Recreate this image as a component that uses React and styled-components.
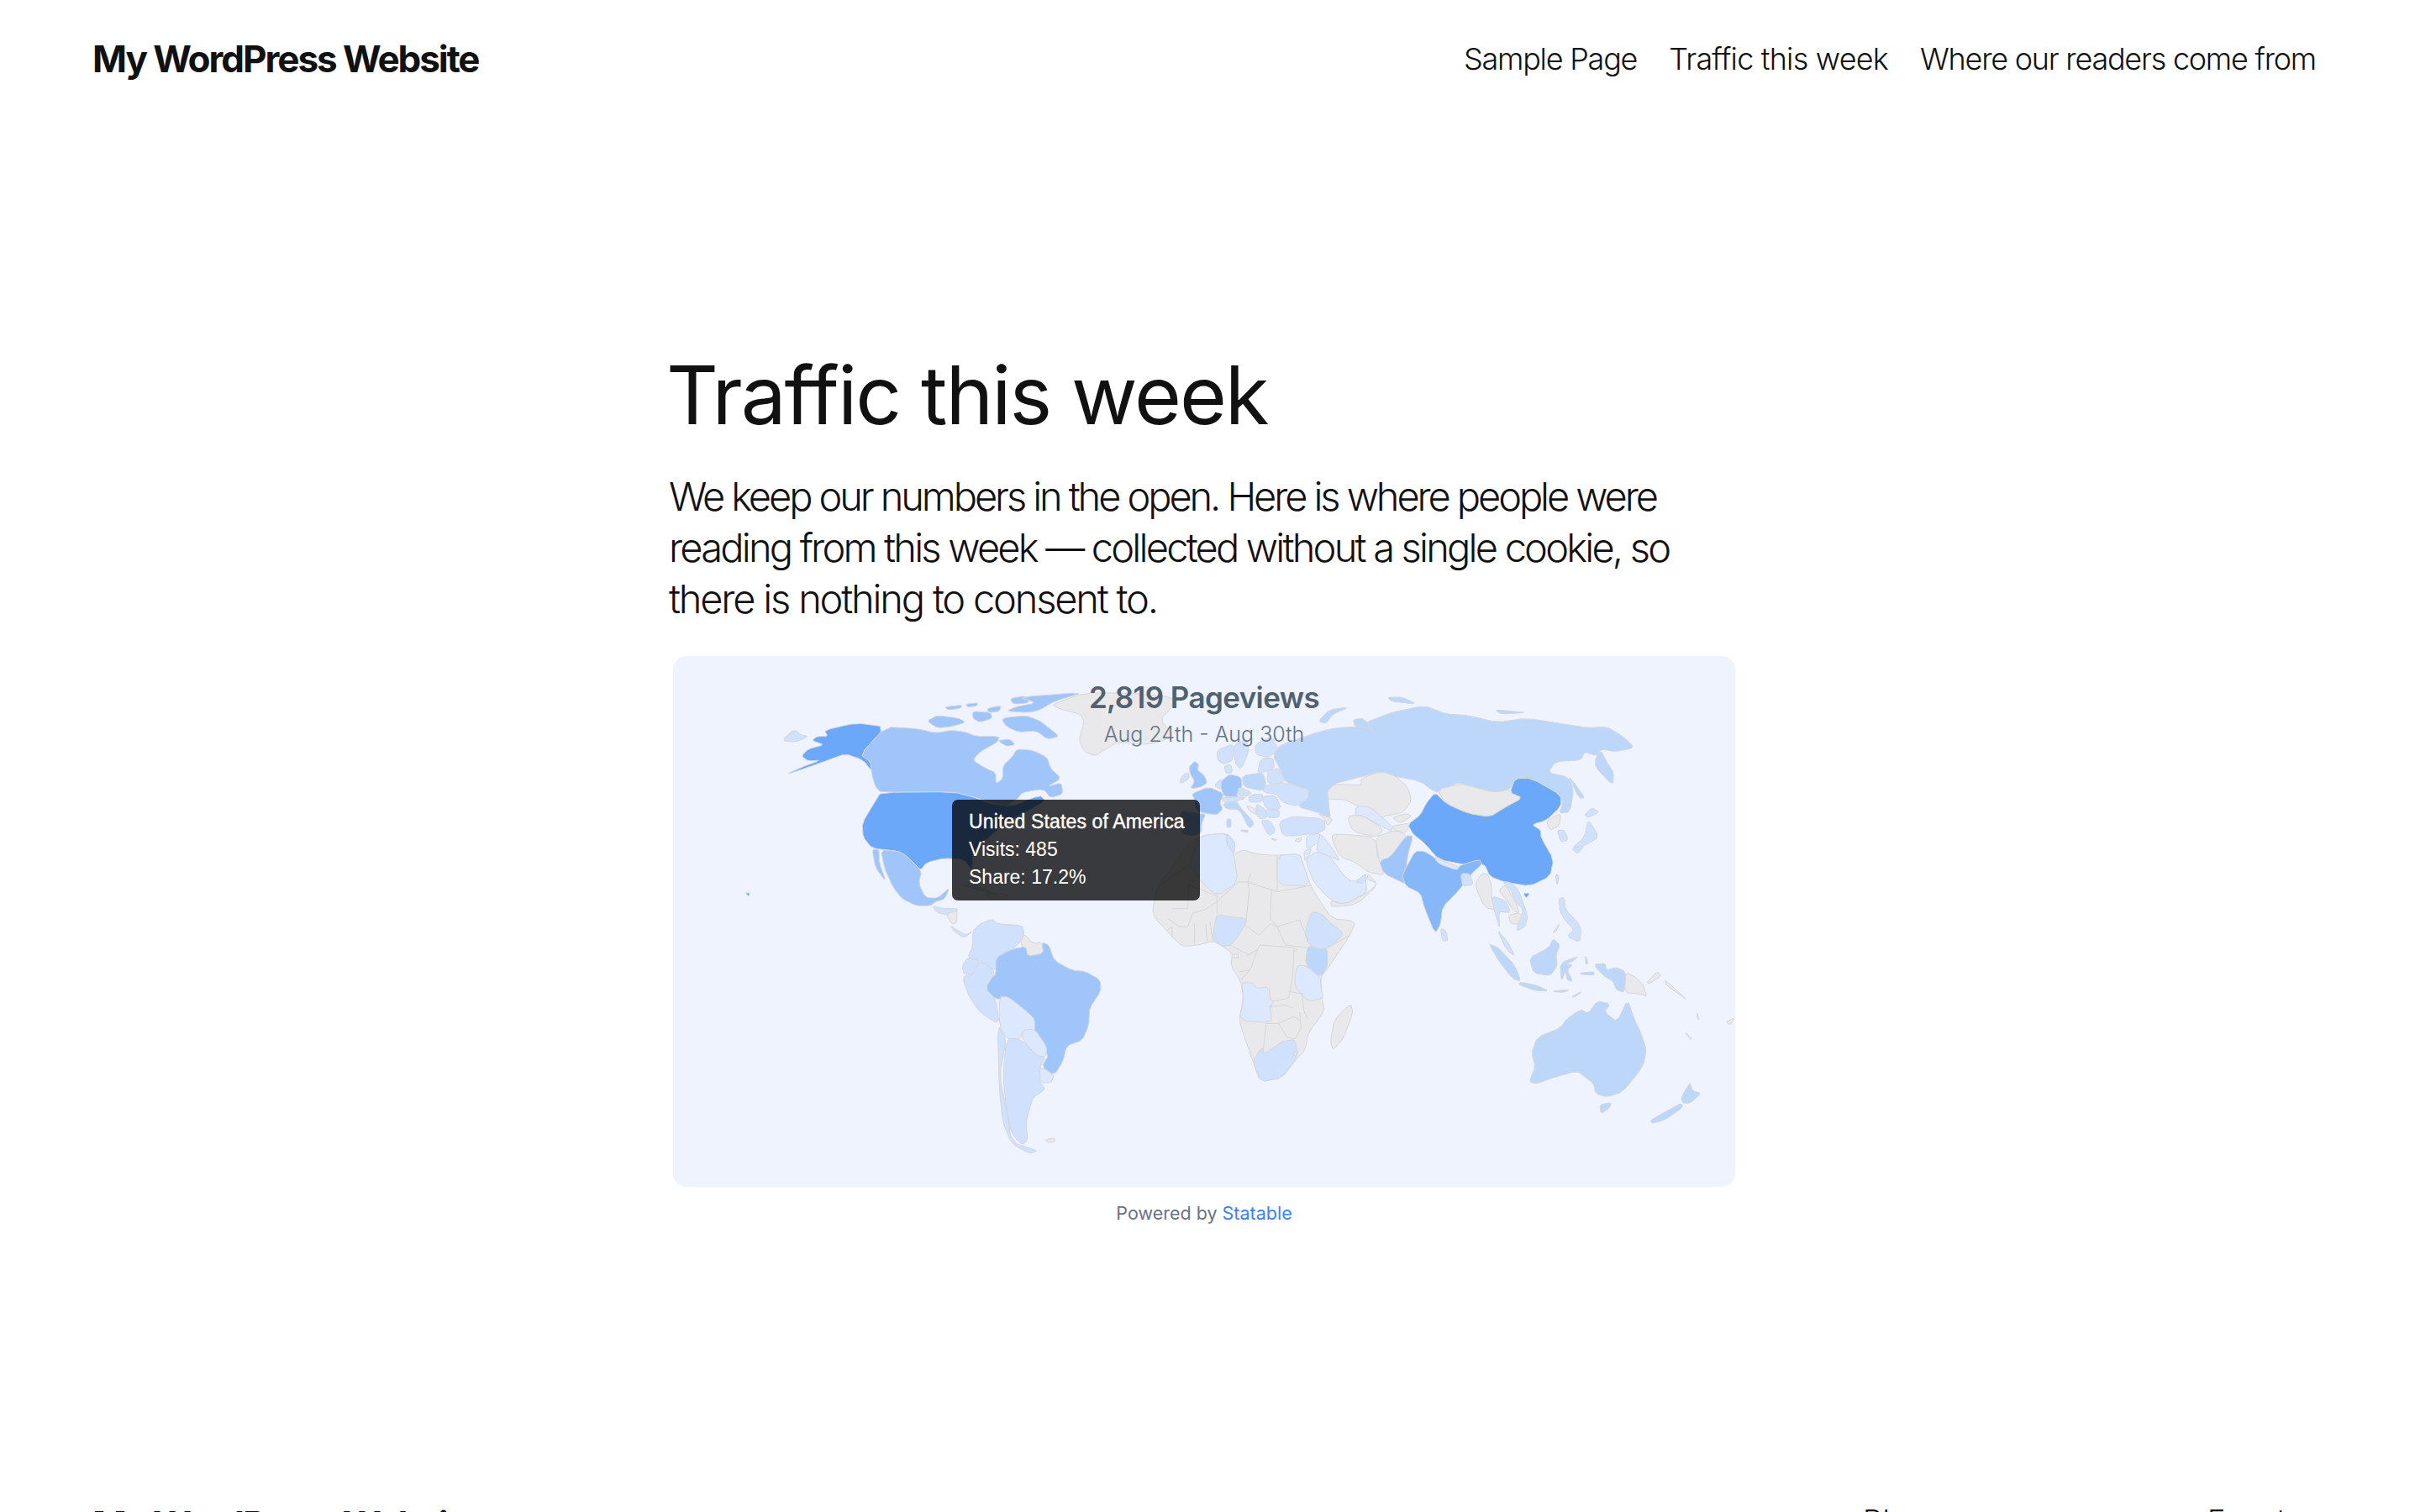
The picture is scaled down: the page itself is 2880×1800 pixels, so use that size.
import React from "react";
import styled, { createGlobalStyle } from "styled-components";

const GlobalStyle = createGlobalStyle`
  html, body {
    margin: 0;
    background: #fff;
    color: #111;
    font-family: Inter, "Liberation Sans", sans-serif;
  }
  #root {
    height: 1800px;
    overflow: hidden;
  }
`;

// the map was traced piece by piece, each frame maps traced coordinates onto the card
const FRAMES = {
  w: "translate(-1,-1) scale(.4209,.3333)",
  ws: "translate(-1,299) scale(.4209,.3333)",
  e: "translate(599,-1) scale(.4337,.3333)",
  es: "translate(599,299) scale(.4337,.3333)",
  eu: "translate(579,99) scale(.3333)",
  af: "translate(539,279) scale(.3333)",
  as: "translate(859,259) scale(.3333)",
};

const SHADES = {
  top: "#6ba8f9",
  india: "#85b7f9",
  mid: "#9fc5fa",
  soft: "#bdd7fa",
  light: "#cfe1fc",
  pale: "#dbe8fd",
  grey: "#e9e9eb",
};

const LAND = [
  // africa base and its colored countries
  ["af", "grey", "95,70 105,20 108,-9 170,-90 210,-150 265,-195 360,-205 390,-170 385,-130 420,-145 465,-130 530,-125 620,-130 630,-100 660,-15 690,35 735,100 820,110 800,160 720,280 695,310 700,390 710,430 650,510 640,570 610,600 558,669 480,684 453,609 425,530 404,465 420,380 408,320 375,270 380,225 345,200 310,180 260,195 200,200 160,160 105,100"],
  ["af", "pale", "265,-195 360,-205 360,-165 385,-130 400,-30 325,20 270,-30 250,-60 225,-90"],
  ["af", "light", "360,-205 390,-170 385,-130 360,-165"],
  ["af", "pale", "540,-125 620,-130 630,-100 660,-18 540,-18"],
  ["af", "light", "325,85 370,95 430,100 425,125 395,170 375,195 345,200 310,175 315,130"],
  ["af", "light", "665,75 700,85 735,120 780,155 725,205 690,210 650,190 640,155 650,110"],
  ["af", "soft", "650,195 690,210 718,205 720,270 695,310 640,265"],
  ["af", "pale", "610,270 640,268 695,310 695,345 705,385 650,398 600,340"],
  ["af", "pale", "412,330 455,330 465,350 510,345 515,390 530,395 515,415 520,473 405,465 420,385"],
  ["af", "light", "453,609 480,684 558,669 615,590 603,531 558,540 492,585 485,560"],
  ["af", "grey", "600,575 612,582 600,592"],
  ["af", "grey", "803,404 810,440 775,530 740,570 730,540 745,460"],

  // north america
  ["w", "top", "430,268 520,242 603,256 532,355 560,375 575,412 565,415 540,375 490,352 440,375 385,400 320,427 370,398 420,375 385,378 365,360 385,335 430,320 395,305 410,290 440,290"],
  ["w", "mid", "532,355 603,256 690,262 745,278 790,268 830,275 860,290 925,290 920,310 870,345 850,375 880,400 915,420 915,460 935,440 935,395 960,365 975,335 1020,340 1060,365 1070,405 1100,440 1060,470 1100,455 1105,495 1070,510 1050,478 990,490 975,515 940,540 900,525 860,510 830,500 795,488 590,490 575,470 565,430 560,380"],
  ["w", "mid", "720,235 750,215 810,225 830,240 790,255 750,260"],
  ["w", "mid", "770,185 820,178 815,190 780,195"],
  ["w", "mid", "830,175 865,170 860,182 835,185"],
  ["w", "mid", "890,190 930,180 925,200 895,205"],
  ["w", "mid", "850,200 900,205 905,225 870,240 850,225"],
  ["w", "mid", "930,225 1000,215 1040,235 1060,255 1095,290 1060,300 1030,270 980,275 945,255"],
  ["w", "mid", "955,155 1000,145 1010,170 965,175"],
  ["w", "mid", "980,150 1165,132 1080,165 1040,195 1010,205 945,200 970,185 1030,170"],
  ["w", "mid", "920,305 955,300 970,320 945,325"],
  ["w", "grey", "1075,175 1165,135 1290,135 1420,150 1410,190 1380,230 1420,290 1350,320 1260,310 1220,340 1195,360 1165,345 1150,300 1165,240 1155,210 1090,190"],
  ["w", "light", "310,305 345,265 365,285 385,290 350,310"],
  ["w", "top", "590,490 795,488 860,510 900,530 960,540 1040,500 1055,520 1000,560 950,590 905,640 850,700 848,770 825,730 770,725 720,740 700,770 665,720 640,700 565,690 540,650 537,600 575,520"],
  ["w", "top", "208,848 220,850 215,862"],
  ["w", "mid", "590,695 640,700 665,720 705,770 697,815 715,865 750,868 785,830 770,872 745,880 730,895 690,895 650,870 625,830 600,760"],
  ["w", "mid", "565,692 585,695 585,740 605,810 575,760"],
  ["w", "light", "735,895 765,905 810,905 795,930 770,925 750,920"],
  ["w", "grey", "775,925 805,910 805,955 790,960"],
  ["w", "light", "785,965 810,985 830,1000 850,985 825,1010 800,990"],
  ["w", "light", "805,815 880,830 920,860 870,840"],
  ["w", "grey", "890,850 950,855 950,872 895,870"],

  // south america
  ["ws", "light", "850,85 870,60 905,42 920,60 990,65 995,95 985,125 960,150 935,185 915,180 915,230 870,190 835,180 850,140"],
  ["ws", "grey", "995,95 1020,130 1045,125 1050,165 1005,175 985,125"],
  ["ws", "mid", "915,180 960,150 1000,140 1005,175 1050,165 1045,125 1065,135 1080,190 1130,225 1170,230 1210,260 1212,300 1180,360 1178,420 1160,475 1115,495 1105,550 1080,600 1045,570 1065,525 1025,480 1025,400 1000,370 950,320 915,330 885,290 900,255 915,240"],
  ["ws", "light", "835,180 870,190 850,240 825,240 820,210"],
  ["ws", "light", "820,250 850,240 870,190 915,230 885,290 915,330 925,420 870,375 840,320"],
  ["ws", "pale", "925,320 950,320 1000,370 1025,400 1025,440 990,440 985,470 945,470 925,420"],
  ["ws", "pale", "990,440 1025,435 1060,500 1055,535 1030,530 990,470"],
  ["ws", "light", "920,420 945,470 925,600 945,720 960,840 1035,870 1010,880 960,845 935,770 925,650"],
  ["ws", "light", "945,470 985,470 1030,530 1055,535 1040,570 1040,625 1055,650 1020,680 1010,720 1000,770 1005,830 990,850 960,810 945,720 935,600"],
  ["ws", "pale", "1040,570 1080,600 1070,628 1040,625"],
  ["ws", "grey", "1055,830 1080,825 1082,838 1060,840"],

  // russia and the north east
  ["e", "soft", "265,360 285,320 400,270 440,260 500,255 530,235 560,220 590,205 680,180 740,210 800,215 880,240 960,225 1060,245 1130,260 1180,255 1225,290 1258,330 1205,345 1165,335 1155,360 1120,345 1110,375 1040,380 1020,420 1075,435 1090,480 1080,560 1050,565 1060,530 1055,500 1005,470 975,440 930,440 915,480 870,490 800,465 775,455 740,475 710,490 670,450 590,430 560,415 505,435 430,460 415,490 420,560 423,580 384,560 331,540 361,510 365,480 300,455 284,405"],
  ["e", "soft", "1150,370 1165,340 1180,380 1200,420 1197,465 1150,400"],
  ["e", "soft", "390,235 420,195 475,185 430,210 410,245"],
  ["e", "soft", "485,230 515,225 545,285 530,260 490,255"],
  ["e", "soft", "580,150 620,150 660,175 590,165"],
  ["e", "soft", "875,195 920,200 960,205 890,210"],
  ["e", "soft", "1075,430 1100,470 1120,510 1105,510"],

  // europe
  ["eu", "light", "205,40 265,15 262,75 230,90 208,75"],
  ["eu", "light", "265,20 310,0 320,40 290,110 270,85"],
  ["eu", "light", "340,20 400,-10 425,40 385,65 345,55"],
  ["eu", "light", "232,95 255,90 260,120 235,122"],
  ["eu", "mid", "105,100 125,78 140,90 135,110 160,130 170,155 150,170 110,178 125,150 110,125"],
  ["eu", "light", "70,155 85,125 105,120 105,140 85,155"],
  ["eu", "mid", "70,255 140,265 165,268 150,300 150,335 120,345 80,340"],
  ["eu", "mid", "115,195 175,170 230,195 215,225 225,250 205,270 165,265 130,255 125,215"],
  ["eu", "light", "195,165 222,140 220,180"],
  ["eu", "mid", "220,150 250,125 290,135 295,170 275,195 280,205 230,205 220,175"],
  ["eu", "soft", "295,130 370,120 380,160 370,185 300,170"],
  ["eu", "light", "360,70 405,65 410,105 350,125"],
  ["eu", "light", "385,110 430,105 450,155 385,160"],
  ["eu", "light", "375,165 450,155 535,180 530,210 490,240 440,225 415,195 370,190"],
  ["eu", "light", "280,170 330,190 310,205 280,200"],
  ["eu", "light", "218,210 280,205 310,210 260,225 230,225"],
  ["eu", "light", "320,200 370,195 365,225 320,225"],
  ["eu", "light", "365,205 415,200 435,250 380,250"],
  ["eu", "soft", "225,230 275,220 285,240 340,300 320,320 285,250 240,250"],
  ["eu", "soft", "240,285 255,285 255,315 240,315"],
  ["eu", "soft", "285,325 315,325 315,335"],
  ["eu", "grey", "310,235 345,250 345,270 320,255"],
  ["eu", "light", "345,230 378,250 385,280 360,285 345,270"],
  ["eu", "light", "380,250 430,255 425,280 385,280"],
  ["eu", "light", "360,290 395,290 415,330 390,345"],
  ["eu", "grey", "395,355 420,358 415,362"],
  ["eu", "grey", "480,362 510,350 500,368"],

  // middle east and central asia
  ["eu", "light", "425,295 480,275 590,285 590,330 490,345 440,345"],
  ["eu", "grey", "565,265 620,285 600,310 590,285"],
  ["eu", "pale", "525,345 575,335 565,370 525,395"],
  ["eu", "pale", "575,335 620,395 645,435 610,420 560,400 565,370"],
  ["eu", "pale", "515,400 545,390 520,440"],
  ["eu", "pale", "520,430 560,400 610,420 660,490 690,510 735,490 740,550 660,590 610,575 550,510"],
  ["eu", "grey", "610,578 660,590 740,550 780,515 740,500 745,480 780,520 705,590 615,600"],
  ["eu", "light", "700,510 735,480 740,500 725,515"],
  ["eu", "grey", "615,340 670,340 770,350 780,430 810,470 795,485 745,475 700,440 645,420 620,370"],
  ["eu", "grey", "600,185 625,160 720,165 720,140 790,115 840,130 885,170 900,220 870,260 850,265 780,280 700,235 660,215 600,215"],
  ["eu", "grey", "670,275 720,270 800,320 775,350 690,330"],
  ["eu", "pale", "700,240 750,240 830,310 830,330 790,310 720,270 700,275"],
  ["eu", "grey", "830,280 880,265 900,275 860,300"],
  ["eu", "grey", "830,310 895,300 880,335 840,325"],
  ["eu", "grey", "770,350 840,325 880,340 875,370 825,420 785,435"],
  ["eu", "mid", "785,435 825,420 880,345 905,345 890,400 880,450 900,490 870,495 885,520 800,480"],

  // china, india and neighbours
  ["e", "grey", "715,480 780,460 800,465 870,490 915,480 950,510 900,545 860,578 800,565 740,530"],
  ["e", "top", "635,605 670,570 685,530 710,490 740,530 800,565 860,578 900,545 950,510 915,490 930,440 975,440 1055,500 1055,540 1015,590 975,605 1000,625 1000,650 1035,730 1025,790 970,825 900,810 860,790 845,745 800,750 720,730 680,670 650,640"],
  ["e", "top", "952,850 970,850 960,868"],
  ["e", "grey", "1015,590 1055,565 1050,610 1025,625"],
  ["e", "light", "1045,625 1065,625 1075,660 1055,668"],
  ["e", "light", "1120,570 1140,545 1160,560 1130,580"],
  ["e", "light", "1130,585 1160,650 1120,680 1085,690 1120,650"],
  ["e", "light", "1085,690 1120,680 1100,710"],
  ["e", "light", "1040,785 1050,785 1045,825"],
  ["e", "india", "630,760 655,700 680,700 705,720 720,740 770,765 780,750 830,730 840,745 810,780 775,840 730,900 725,960 710,995 680,900 670,850 630,825 620,790"],
  ["e", "pale", "707,720 730,735 775,755 770,768 720,745"],
  ["e", "light", "780,780 805,780 815,820 785,825"],
  ["e", "light", "725,975 740,985 745,1020 730,1020"],

  // south east asia
  ["as", "grey", "285,40 310,0 330,0 345,40 345,85 360,130 320,120"],
  ["as", "light", "385,30 410,30 440,55 475,150 465,190 435,205 440,175 460,130 430,100 415,60"],
  ["as", "grey", "370,60 395,40 430,100 445,140 425,135 400,95"],
  ["as", "light", "345,80 395,95 415,140 370,135 375,200 355,130"],
  ["as", "grey", "405,150 440,140 455,150 440,180 415,180"],
  ["as", "light", "365,200 400,240 430,295 400,275"],
  ["as", "soft", "335,250 370,265 430,330 450,385 420,375 370,310"],
  ["as", "soft", "440,395 450,388 510,400 550,420 500,418"],
  ["as", "soft", "480,300 550,265 565,232 590,255 575,290 580,330 555,365 495,355"],
  ["as", "soft", "590,320 655,295 640,310 605,325 635,325 615,345 635,385 615,380 610,345 595,385"],
  ["as", "light", "585,90 605,85 610,130 650,170 665,200 660,245 615,225 640,200 610,170 590,135"],
  ["as", "soft", "560,420 625,415 600,425"],
  ["as", "soft", "630,440 670,420 645,440"],
  ["as", "soft", "660,355 710,350 712,362 665,360"],
  ["as", "soft", "680,290 690,320 682,325"],
  ["as", "soft", "710,325 750,320 755,345 790,335 825,350 820,425 790,415 780,385 745,365"],
  ["as", "grey", "825,350 865,375 885,395 900,440 880,430 820,425"],
  ["as", "grey", "565,210 590,175 572,212"],

  // oceania
  ["es", "soft", "975,520 990,465 1055,430 1070,400 1110,365 1130,380 1155,335 1190,345 1175,375 1210,410 1238,330 1255,395 1275,450 1290,510 1280,570 1225,660 1180,678 1150,665 1145,630 1120,605 1100,585 1030,610 990,630 968,625 985,570"],
  ["es", "soft", "1162,705 1192,698 1190,715 1165,738"],
  ["es", "soft", "1410,625 1415,655 1440,665 1410,700 1390,700 1385,680"],
  ["es", "soft", "1385,700 1390,715 1340,760 1305,772 1300,762 1350,725"],
  ["es", "grey", "1395,445 1415,470 1410,472"],
  ["es", "grey", "1428,375 1435,400 1430,400"],
  ["es", "grey", "1290,270 1320,230 1330,245 1300,272"],
  ["es", "grey", "1340,258 1400,330 1385,315 1345,280"],
  ["es", "grey", "1508,410 1532,395 1520,420"],
];

const BORDERS = [
  "220,65 225,-20 325,20",
  "165,65 220,65",
  "325,20 325,40 280,70 240,80 220,130 190,130 150,100",
  "245,120 245,190",
  "285,120 290,180",
  "300,110 310,180",
  "150,140 165,130 165,170",
  "325,85 325,40 400,-30 435,-30 445,-60",
  "430,100 440,0 435,-30 540,5 540,-125",
  "520,0 515,100 540,130 620,105 630,130 650,180",
  "430,100 425,125 475,160 515,120 540,130 570,195 650,205",
  "540,5 660,-18",
  "370,195 440,230 470,210 480,195 600,205 610,210",
  "380,228 400,228 400,240 380,240",
  "430,235 470,210 445,280 410,320",
  "405,290 440,285",
  "600,210 595,310 590,340 580,385 530,395",
  "580,360 630,370 635,430 650,460",
  "510,415 570,410 595,420",
  "500,475 545,475 575,525 605,530 625,490 620,435",
  "545,475 600,450 620,465",
  "500,475 490,575",
  "108,-9 225,-90",
  "720,205 800,160",
];

// cut the corners of a traced outline so the coasts don't look like straight lines
function soften(points) {
  const pts = points.split(" ").map((p) => p.split(",").map(Number));
  return pts
    .flatMap(([x, y], i) => {
      const [nx, ny] = pts[(i + 1) % pts.length];
      return [
        `${x + (nx - x) * 0.18},${y + (ny - y) * 0.18}`,
        `${x + (nx - x) * 0.82},${y + (ny - y) * 0.82}`,
      ];
    })
    .join(" ");
}

const LEAD_LINES = [
  ["We keep our numbers in the open. Here is where people were", -3.1],
  ["reading from this week — collected without a single cookie, so", -2.8],
  ["there is nothing to consent to.", -2.2],
];

const Page = styled.div`
  width: 2866px;
`;

const Header = styled.header`
  display: flex;
  justify-content: space-between;
  align-items: center;
  height: 140px;
  padding: 0 110px;
`;

const SiteTitle = styled.div`
  font-size: 44px;
  font-weight: 700;
  letter-spacing: -2.05px;
`;

const Nav = styled.nav`
  display: flex;
  gap: 38px;
`;

const NavLink = styled.a`
  font-size: 36px;
  font-weight: 300;
  letter-spacing: ${(props) => props.$tracking}px;
`;

const Main = styled.main`
  width: 1274px;
  margin: 0 auto;
  padding-top: 273px;
`;

const Title = styled.h1`
  margin: 0 0 0 -3px;
  font-size: 96px;
  line-height: 1.2;
  font-weight: 400;
  letter-spacing: -2px;
`;

const Lead = styled.p`
  margin: 32px 0 0;
  font-size: 47px;
  line-height: 61px;
  font-weight: 300;
`;

const LeadLine = styled.span`
  display: block;
  letter-spacing: ${(props) => props.$tracking}px;
`;

const Card = styled.div`
  position: relative;
  width: 1264px;
  height: 632px;
  margin: 38px 5px 0;
  border-radius: 16px;
  background: #eef3fd;
  overflow: hidden;
`;

const WorldMap = styled.svg`
  display: block;
  width: 100%;
  height: 100%;
`;

const Land = styled.polygon`
  fill: ${(props) => SHADES[props.$shade]};
  stroke: #d6d6d9;
  stroke-width: 1;
  stroke-linejoin: round;
  vector-effect: non-scaling-stroke;
`;

const Border = styled.polyline`
  fill: none;
  stroke: #d6d6d9;
  stroke-width: 1;
  vector-effect: non-scaling-stroke;
`;

const MapHeading = styled.div`
  position: absolute;
  top: 27px;
  left: 0;
  right: 0;
  text-align: center;
`;

const Views = styled.div`
  font-size: 35px;
  line-height: 44px;
  font-weight: 600;
  letter-spacing: -0.6px;
  color: #526172;
`;

const Range = styled.div`
  margin-top: 3px;
  font-size: 25px;
  line-height: 38px;
  font-weight: 300;
  color: #64748b;
`;

const Tooltip = styled.div`
  position: absolute;
  left: 332px;
  top: 171px;
  width: 295px;
  height: 120px;
  box-sizing: border-box;
  padding: 10px 20px;
  border-radius: 7px;
  background: rgba(0, 0, 0, 0.76);
  color: #fff;
  font-family: "Liberation Sans", Arial, sans-serif;
  font-size: 23px;
  line-height: 33px;
  white-space: nowrap;
`;

const TipTitle = styled.div`
  letter-spacing: 0.15px;
  -webkit-text-stroke: 0.4px #fff;
`;

const Credit = styled.div`
  margin-top: 17px;
  text-align: center;
  font-size: 21.5px;
  line-height: 28px;
  color: #6b7280;
`;

const CreditLink = styled.a`
  color: #3b82f6;
`;

const Footer = styled.footer`
  display: flex;
  margin-top: 330px;
  padding: 0 110px;
`;

const FooterTitle = styled(SiteTitle)`
  flex: 1;
`;

const FooterColumn = styled.div`
  width: ${(props) => props.$width}px;
  font-size: 36px;
  font-weight: 300;
`;

export default function App() {
  return (
    <Page>
      <GlobalStyle />
      <Header>
        <SiteTitle>My WordPress Website</SiteTitle>
        <Nav>
          <NavLink $tracking={-1.25}>Sample Page</NavLink>
          <NavLink $tracking={-0.8}>Traffic this week</NavLink>
          <NavLink $tracking={-1.25}>Where our readers come from</NavLink>
        </Nav>
      </Header>
      <Main>
        <Title>Traffic this week</Title>
        <Lead>
          {LEAD_LINES.map(([line, tracking]) => (
            <LeadLine key={line} $tracking={tracking}>
              {line}
            </LeadLine>
          ))}
        </Lead>
        <Card>
          <WorldMap viewBox="0 0 1264 632">
            {LAND.map(([frame, shade, points], i) => (
              <Land key={i} transform={FRAMES[frame]} $shade={shade} points={soften(points)} />
            ))}
            {BORDERS.map((points, i) => (
              <Border key={i} transform={FRAMES.af} points={points} />
            ))}
          </WorldMap>
          <MapHeading>
            <Views>2,819 Pageviews</Views>
            <Range>Aug 24th - Aug 30th</Range>
          </MapHeading>
          <Tooltip>
            <TipTitle>United States of America</TipTitle>
            <div>Visits: 485</div>
            <div>Share: 17.2%</div>
          </Tooltip>
        </Card>
        <Credit>
          Powered by <CreditLink>Statable</CreditLink>
        </Credit>
      </Main>
      <Footer>
        <FooterTitle>My WordPress Website</FooterTitle>
        <FooterColumn $width={410}>Blog</FooterColumn>
        <FooterColumn $width={129}>Events</FooterColumn>
      </Footer>
    </Page>
  );
}
